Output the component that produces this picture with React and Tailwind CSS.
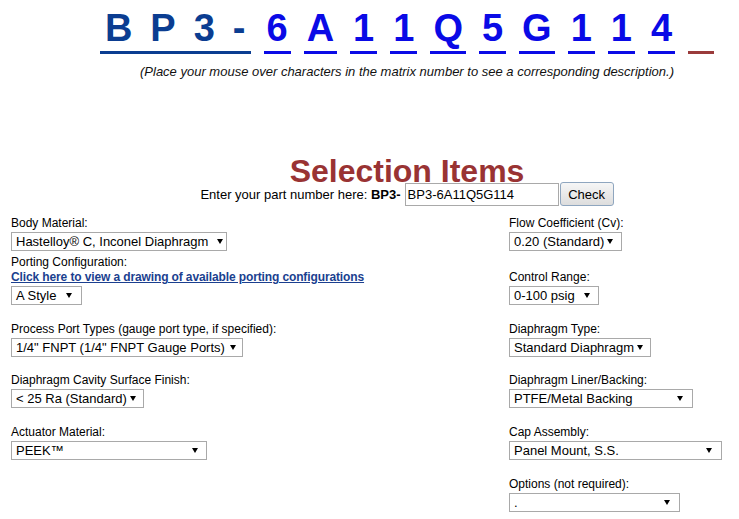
import React from "react";

/**
 * Part-number matrix page: the big spaced part number on top, then the
 * "Selection Items" form with two columns of option dropdowns.
 * Everything is static — the selects are drawn as plain boxes so they
 * look the same as the old browser controls.
 */

const FONT = "font-['Liberation_Sans',Arial,sans-serif]";

const MATRIX = ["6", "A", "1", "1", "Q", "5", "G", "1", "1", "4"];

const Arrow = () => (
  <svg width="6" height="5" viewBox="0 0 6 5" className="shrink-0">
    <polygon points="0,0 6,0 3,5" fill="#000" />
  </svg>
);

const Select = ({ value, className }) => (
  <div
    className={
      "flex items-center justify-between h-[19px] border border-[#a9a9a9] bg-white pl-[4px] text-[13px] leading-[15px] text-black whitespace-nowrap " +
      className
    }
  >
    <span>{value}</span>
    <Arrow />
  </div>
);

const Label = ({ children }) => (
  <div className="text-[12px] leading-[15px] text-black">{children}</div>
);

const Field = ({ label, value, className }) => (
  <div>
    <Label>{label}</Label>
    <div className="mt-[1px]">
      <Select value={value} className={className} />
    </div>
  </div>
);

export default function App() {
  return (
    <div className={"w-full min-h-screen overflow-hidden bg-white " + FONT}>
      <div className="w-[792px] ml-[11px]">
        {/* Matrix number */}
        <div className="flex justify-center gap-[13px] pt-[6px] text-[38px] font-bold leading-[45px]">
          <span className="flex gap-[18px] border-b-[3px] border-[#0b3d91] text-[#0b3d91] px-[5px]">
            <span>B</span>
            <span>P</span>
            <span>3</span>
            <span>-</span>
          </span>
          {MATRIX.map((ch, i) => (
            <span
              key={i}
              className="block border-b-[3px] border-[#0a0ae6] text-[#0a0ae6] px-[3px]"
            >
              {ch}
            </span>
          ))}
          <span className="block w-[26px] border-b-[3px] border-[#9a3b3b]">
            &nbsp;
          </span>
        </div>
        <p className="mt-[10px] text-center text-[13px] leading-[15px] italic text-[#111]">
          (Place your mouse over characters in the matrix number to see a
          corresponding description.)
        </p>

        {/* Title + part number entry */}
        <h1 className="mt-[82px] text-center text-[32px] leading-[21px] font-bold text-[#993333]">
          Selection Items
        </h1>
        <div className="flex items-center justify-center h-[24px] text-[13px] leading-[15px] text-black">
          <span>Enter your part number here:&nbsp;</span>
          <span className="font-bold">BP3-</span>
          <div className="ml-[4px] w-[154px] h-[23px] border border-[#a9a9a9] bg-white px-[2px] flex items-center">
            BP3-6A11Q5G114
          </div>
          <button
            type="button"
            className="ml-[1px] w-[54px] h-[24px] rounded-[3px] border border-[#8fa6bf] bg-gradient-to-b from-[#f6f6f6] to-[#dddddd] text-[13px] text-black"
          >
            Check
          </button>
        </div>

        {/* Option fields */}
        <div className="mt-[10px]">
          <div className="grid grid-cols-[498px_1fr] mb-[4px]">
            <Field label="Body Material:" value="Hastelloy® C, Inconel Diaphragm" className="w-[216px] pr-[3px]" />
            <Field label="Flow Coefficient (Cv):" value="0.20 (Standard)" className="w-[113px] pr-[8px]" />
          </div>
          <div className="grid grid-cols-[498px_1fr] mb-[17px]">
            <div>
              <Label>Porting Configuration:</Label>
              <a
                href="#"
                className="block text-[12px] leading-[15px] font-bold tracking-[-0.12px] text-[#1b3f8f] underline"
              >
                Click here to view a drawing of available porting configurations
              </a>
              <div className="mt-[1px]">
                <Select value="A Style" className="w-[71px] pr-[9px]" />
              </div>
            </div>
            <div className="pt-[15px]">
              <Field label="Control Range:" value="0-100 psig" className="w-[90px] pr-[8px]" />
            </div>
          </div>
          <div className="grid grid-cols-[498px_1fr] mb-[16px]">
            <Field
              label="Process Port Types (gauge port type, if specified):"
              value={'1/4" FNPT (1/4" FNPT Gauge Ports)'}
              className="w-[232px] pr-[6px]"
            />
            <Field label="Diaphragm Type:" value="Standard Diaphragm" className="w-[142px] pr-[7px]" />
          </div>
          <div className="grid grid-cols-[498px_1fr] mb-[17px]">
            <Field label="Diaphragm Cavity Surface Finish:" value="< 25 Ra (Standard)" className="w-[133px] pr-[7px]" />
            <Field label="Diaphragm Liner/Backing:" value="PTFE/Metal Backing" className="w-[184px] pr-[9px]" />
          </div>
          <div className="grid grid-cols-[498px_1fr] mb-[17px]">
            <Field label="Actuator Material:" value="PEEK™" className="w-[196px] pr-[8px]" />
            <Field label="Cap Assembly:" value="Panel Mount, S.S." className="w-[213px] pr-[9px]" />
          </div>
          <div className="grid grid-cols-[498px_1fr]">
            <div />
            <Field label="Options (not required):" value="." className="w-[171px] pr-[9px]" />
          </div>
        </div>
      </div>
    </div>
  );
}
